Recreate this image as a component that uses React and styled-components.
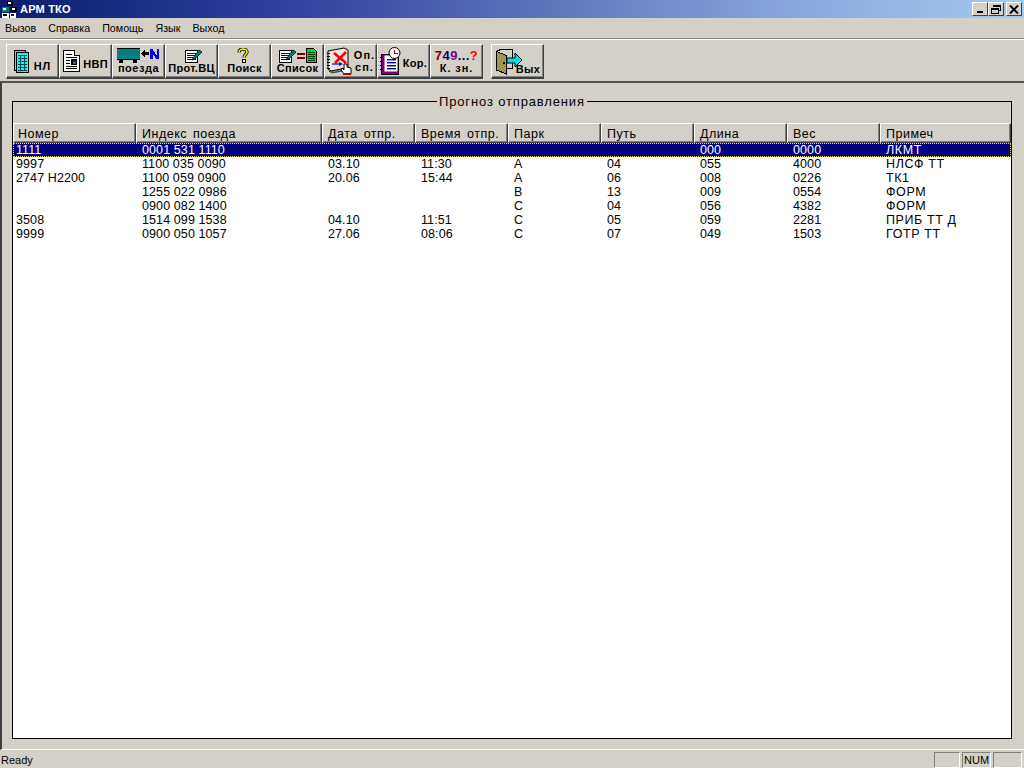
import React from 'react';
import styled, { createGlobalStyle } from 'styled-components';

const GlobalStyle = createGlobalStyle`
  html, body {
    margin: 0;
    padding: 0;
    height: 100%;
    overflow: hidden;
    background: #d4d0c8;
  }
  #root {
    height: 100%;
  }
`;

const Win = styled.div`
  display: flex;
  flex-direction: column;
  height: 100vh;
  background: #d4d0c8;
  color: #000;
  font-family: 'Liberation Sans', Arial, sans-serif;
  font-size: 11px;
`;

const TitleBar = styled.div`
  display: flex;
  align-items: center;
  height: 18px;
  flex: none;
  padding: 0 2px;
  background: linear-gradient(90deg, #0a1f6e 0%, #2f3e9c 27%, #5f76bd 54%, #85a5dc 76%, #a6caf0 100%);
`;

const TitleText = styled.span`
  flex: 1;
  margin-left: 2px;
  color: #fff;
  font-weight: bold;
  font-size: 11px;
  letter-spacing: 0.2px;
`;

const CaptionButton = styled.div`
  width: 16px;
  height: 14px;
  box-sizing: border-box;
  margin-left: ${p => p.$gap || 0}px;
  background: #d4d0c8;
  border: 1px solid;
  border-color: #fff #404040 #404040 #fff;
  display: flex;
  align-items: center;
  justify-content: center;
`;

const MenuBar = styled.div`
  display: flex;
  align-items: center;
  height: 20px;
  flex: none;
  padding-left: 5px;
  gap: 12px;
  border-bottom: 1px solid #808080;
`;

const MenuItem = styled.span`
  font-size: 10.7px;
  color: #000;
`;

const Toolbar = styled.div`
  display: flex;
  align-items: flex-start;
  height: 42px;
  flex: none;
  box-sizing: border-box;
  padding: 4px 0 0 6px;
  border-top: 1px solid #fff;
`;

const ToolButton = styled.div`
  width: 53px;
  height: 35px;
  flex: none;
  box-sizing: border-box;
  margin-left: ${p => p.$gap || 0}px;
  padding-top: ${p => (p.$stack ? 3 : 0)}px;
  background: #d4d0c8;
  border-top: 1px solid #fff;
  border-left: 1px solid #fff;
  border-right: 1px solid #404040;
  border-bottom: 2px solid #404040;
  box-shadow: inset -1px -1px 0 #808080;
  display: flex;
  flex-direction: ${p => (p.$stack ? 'column' : 'row')};
  align-items: center;
  justify-content: ${p => (p.$stack ? 'flex-start' : 'center')};
  gap: ${p => (p.$stack ? 0 : p.$space ?? 2)}px;
  svg {
    display: block;
    flex: none;
  }
`;

const ToolLabel = styled.span`
  font-weight: bold;
  font-size: 11px;
  line-height: ${p => p.$lead || 10}px;
  letter-spacing: ${p => p.$spacing ?? 0.3}px;
  white-space: nowrap;
  text-align: center;
  margin-top: ${p => p.$top || 0}px;
  margin-left: ${p => p.$left || 0}px;
`;

const Digits = styled.span`
  font-weight: bold;
  font-size: 13px;
  line-height: 15px;
  letter-spacing: 0.4px;
  white-space: nowrap;
`;

const Digit = styled.span`
  color: ${p => p.$color};
`;

const Client = styled.div`
  flex: 1;
  min-height: 0;
  box-sizing: border-box;
  display: flex;
  padding: 18px 12px 10px 10px;
  border-top: 2px solid #505050;
  border-left: 2px solid #404040;
  border-bottom: 1px solid #fff;
`;

const Panel = styled.div`
  flex: 1;
  position: relative;
  display: flex;
  flex-direction: column;
  box-sizing: border-box;
  border: 1px solid #000;
  padding-top: 21px;
  min-width: 0;
`;

const Legend = styled.span`
  position: absolute;
  top: -8px;
  left: 424px;
  padding: 0 2px;
  background: #d4d0c8;
  font-size: 13px;
  line-height: 15px;
  letter-spacing: 0.85px;
`;

const COLUMNS = '123px 186px 93px 93px 93px 93px 93px 93px 1fr';

const HeaderRow = styled.div`
  display: grid;
  grid-template-columns: ${COLUMNS};
  height: 20px;
  flex: none;
`;

const HeaderCell = styled.div`
  box-sizing: border-box;
  padding-left: ${p => (p.$first ? 4 : 5)}px;
  padding-top: 1px;
  font-size: 12.5px;
  line-height: 18px;
  letter-spacing: 0.5px;
  word-spacing: 2px;
  border-top: 1px solid #fff;
  border-left: 1px solid #fff;
  border-right: 1px solid #404040;
  border-bottom: 1px solid #404040;
  box-shadow: inset -1px -1px 0 #808080;
  white-space: nowrap;
  overflow: hidden;
`;

const Rows = styled.div`
  flex: 1;
  background: #fff;
  min-height: 0;
`;

const Row = styled.div`
  display: grid;
  grid-template-columns: ${COLUMNS};
  height: 14px;
  box-sizing: border-box;
  background: ${p => (p.$selected ? '#000080' : '#fff')};
  color: ${p => (p.$selected ? '#fff' : '#000')};
  outline: ${p => (p.$selected ? '1px dotted #f0e060' : 'none')};
  outline-offset: -1px;
`;

const Cell = styled.div`
  box-sizing: border-box;
  height: 14px;
  padding-left: ${p => (p.$first ? 3 : 6)}px;
  padding-top: 1px;
  font-size: 12.5px;
  line-height: 13px;
  letter-spacing: ${p => (p.$note ? 0.6 : 0.1)}px;
  white-space: nowrap;
  overflow: hidden;
`;

const StatusBar = styled.div`
  display: flex;
  align-items: flex-end;
  height: 18px;
  flex: none;
  padding-right: 2px;
`;

const StatusText = styled.span`
  flex: 1;
  padding-left: 1px;
  font-size: 11px;
  line-height: 15px;
`;

const StatusPane = styled.div`
  width: ${p => p.$w}px;
  height: 16px;
  box-sizing: border-box;
  margin-left: 2px;
  padding-left: 1px;
  border: 1px solid;
  border-color: #808080 #fff #fff #808080;
  font-size: 11px;
  line-height: 15px;
`;

const AppIcon = () => (
  <svg width="16" height="17" viewBox="0 0 16 17" shapeRendering="crispEdges">
    <rect x="5" y="0" width="6" height="5" fill="#000" />
    <rect x="6" y="1" width="3" height="2" fill="#fff" />
    <rect x="0" y="6" width="7" height="5" fill="#008080" />
    <rect x="1" y="7" width="3" height="2" fill="#fff" />
    <rect x="8" y="6" width="7" height="5" fill="#000" />
    <rect x="10" y="7" width="3" height="2" fill="#fff" />
    <rect x="0" y="12" width="7" height="5" fill="#fff" />
    <rect x="1" y="13" width="4" height="2" fill="#000" />
    <rect x="8" y="12" width="6" height="5" fill="#fff" />
    <rect x="9" y="13" width="3" height="2" fill="#000080" />
  </svg>
);

const NlIcon = () => (
  <svg width="15" height="23" viewBox="0 0 15 23" shapeRendering="crispEdges">
    <rect x="0.5" y="0.5" width="11" height="20" fill="#00ffff" stroke="#000" />
    <rect x="2.5" y="2.5" width="12" height="20" fill="#00ffff" stroke="#000" />
    {[5, 8, 11, 14, 17, 20].map(y => (
      <rect key={y} x="4" y={y} width="9" height="1" fill="#004040" />
    ))}
    <rect x="6" y="5" width="1" height="15" fill="#004040" />
    <rect x="10" y="5" width="1" height="15" fill="#004040" />
  </svg>
);

const NvpIcon = () => (
  <svg width="17" height="22" viewBox="0 0 17 22" shapeRendering="crispEdges">
    <path d="M0.5 0.5H11.5L16.5 5.5V21.5H0.5Z" fill="#fff" stroke="#000" />
    <path d="M11.5 0.5V5.5H16.5" fill="#d4d0c8" stroke="#000" />
    <rect x="3" y="4" width="6" height="1" fill="#000" />
    <rect x="3" y="7" width="11" height="1" fill="#000" />
    <rect x="3" y="10" width="4" height="1" fill="#000" />
    <rect x="3" y="13" width="4" height="1" fill="#000" />
    <rect x="3" y="16" width="11" height="1" fill="#000" />
    <rect x="3" y="18" width="11" height="1" fill="#000" />
    <rect x="8" y="9" width="6" height="6" fill="#000" />
    <rect x="10" y="11" width="3" height="3" fill="#0060e0" />
  </svg>
);

const TrainIcon = () => (
  <svg width="43" height="15" viewBox="0 0 43 15" shapeRendering="crispEdges">
    <rect x="0" y="1" width="23" height="10" fill="#008080" />
    <rect x="0" y="0" width="23" height="1" fill="#000" />
    <rect x="0" y="11" width="23" height="1" fill="#000" />
    <rect x="2" y="12" width="4" height="3" fill="#000" />
    <rect x="16" y="12" width="4" height="3" fill="#000" />
    <path d="M24 5L28 1V4H32V7H28V10Z" fill="#000" />
    <path d="M33 1H35.5L39.5 7V1H42V11H39.5L35.5 5V11H33Z" fill="#0000ff" />
  </svg>
);

const PadPen = ({ x = 0 }) => (
  <g transform={`translate(${x} 0)`}>
    <rect x="0.5" y="2.5" width="12" height="12" fill="#fff" stroke="#000" />
    {[5, 7, 9, 11].map(y => (
      <rect key={y} x="2" y={y} width="9" height="1" fill="#0000c0" />
    ))}
    <path d="M8 10L14 2L17 4L10 11L7 12Z" fill="#008080" stroke="#000" strokeWidth="0.8" shapeRendering="auto" />
  </g>
);

const ProtIcon = () => (
  <svg width="21" height="15" viewBox="0 0 21 15" shapeRendering="crispEdges">
    <PadPen x={4} />
  </svg>
);

const QuestionIcon = () => (
  <svg width="16" height="15" viewBox="0 0 16 15">
    <path
      d="M2 4.5C2 2 4 1 6 1C8.5 1 10 2.5 10 4C10 6.5 7 6.5 7 9.5"
      fill="none"
      stroke="#000"
      strokeWidth="3.2"
    />
    <path
      d="M2 4.5C2 2 4 1 6 1C8.5 1 10 2.5 10 4C10 6.5 7 6.5 7 9.5"
      fill="none"
      stroke="#ffff00"
      strokeWidth="1.6"
    />
    <rect x="5" y="11" width="4" height="4" fill="#000" />
    <rect x="6" y="12" width="2" height="2" fill="#ffff00" />
  </svg>
);

const ListIcon = () => (
  <svg width="38" height="15" viewBox="0 0 38 15" shapeRendering="crispEdges">
    <PadPen />
    <rect x="18" y="5" width="8" height="2" fill="#800000" />
    <rect x="18" y="9" width="8" height="2" fill="#800000" />
    <path d="M27.5 0.5H34.5L37.5 3.5V14.5H27.5Z" fill="#00e000" stroke="#000" />
    {[4, 6, 8, 10, 12].map(y => (
      <rect key={y} x="29" y={y} width="7" height="1" fill="#004000" />
    ))}
  </svg>
);

const OpListIcon = () => (
  <svg width="28" height="28" viewBox="0 0 28 28">
    <path d="M2 4L18 1L22 3V21L5 24L2 22Z" fill="#e8e8e0" stroke="#000" />
    <path d="M5 24L22 21V23L6 26L3 24Z" fill="#808080" stroke="#000" strokeWidth="0.6" />
    {[6, 9, 12, 15, 18, 21].map(y => (
      <rect key={y} x="1" y={y} width="3" height="1" fill="#000" />
    ))}
    <path d="M8 6L20 16M20 5L9 16" stroke="#ff0000" strokeWidth="2.6" />
    <path d="M6 17H14" stroke="#0000ff" strokeWidth="1.2" />
    <path d="M13 15L17 17L13 19Z" fill="#0000ff" />
    <path d="M18 17V23L16 21L15 23L18 27H25V21L21 20V17Z" fill="#fff" stroke="#000" />
    <rect x="17" y="26" width="8" height="2" fill="#c00000" />
  </svg>
);

const CorIcon = () => (
  <svg width="21" height="28" viewBox="0 0 21 28">
    <path d="M1.5 7.5H18.5V27.5H1.5Z" fill="#800080" stroke="#000" />
    <rect x="4.5" y="8.5" width="13" height="16" fill="#fff" />
    {[12, 15, 18, 21].map(y => (
      <rect key={y} x="7" y={y} width="9" height="1.4" fill="#000080" />
    ))}
    {[10, 14, 18, 22].map(y => (
      <rect key={y} x="0" y={y} width="3" height="1" fill="#000" />
    ))}
    <circle cx="14.5" cy="6" r="5.5" fill="#fff" stroke="#000" />
    <path d="M14.5 3V6.5H18" stroke="#c00000" strokeWidth="1.2" fill="none" />
  </svg>
);

const ExitIcon = () => (
  <svg width="28" height="27" viewBox="0 0 28 27" shapeRendering="crispEdges">
    <path d="M1.5 3.5L5.5 1.5H17.5V20.5H12" fill="#d4d0c8" stroke="#000" />
    <path d="M1.5 3.5L11.5 7.5V26L1.5 22Z" fill="#a09848" stroke="#000" />
    <rect x="8" y="14" width="2" height="2" fill="#000" />
    <path d="M12 10H20V5L27 12L20 19V15H12Z" fill="#00e0e0" stroke="#000" shapeRendering="auto" />
  </svg>
);

const columns = ['Номер', 'Индекс поезда', 'Дата отпр.', 'Время отпр.', 'Парк', 'Путь', 'Длина', 'Вес', 'Примеч'];

const rows = [
  ['1111', '0001 531 1110', '', '', '', '', '000', '0000', 'ЛКМТ'],
  ['9997', '1100 035 0090', '03.10', '11:30', 'A', '04', '055', '4000', 'НЛСФ ТТ'],
  ['2747 H2200', '1100 059 0900', '20.06', '15:44', 'A', '06', '008', '0226', 'ТК1'],
  ['', '1255 022 0986', '', '', 'B', '13', '009', '0554', 'ФОРМ'],
  ['', '0900 082 1400', '', '', 'C', '04', '056', '4382', 'ФОРМ'],
  ['3508', '1514 099 1538', '04.10', '11:51', 'C', '05', '059', '2281', 'ПРИБ ТТ Д'],
  ['9999', '0900 050 1057', '27.06', '08:06', 'C', '07', '049', '1503', 'ГОТР ТТ'],
];

const menu = ['Вызов', 'Справка', 'Помощь', 'Язык', 'Выход'];

export default function App() {
  return (
    <Win>
      <GlobalStyle />
      <TitleBar>
        <AppIcon />
        <TitleText>АРМ ТКО</TitleText>
        <CaptionButton>
          <svg width="8" height="8" viewBox="0 0 8 8" shapeRendering="crispEdges">
            <rect x="1" y="6" width="6" height="2" fill="#000" />
          </svg>
        </CaptionButton>
        <CaptionButton>
          <svg width="10" height="9" viewBox="0 0 10 9" shapeRendering="crispEdges">
            <path d="M2.5 2V0.5H9.5V5.5H7.5" fill="none" stroke="#000" />
            <rect x="2" y="0" width="8" height="2" fill="#000" />
            <rect x="0.5" y="3.5" width="7" height="5" fill="#d4d0c8" stroke="#000" />
            <rect x="0" y="3" width="8" height="2" fill="#000" />
          </svg>
        </CaptionButton>
        <CaptionButton $gap={2}>
          <svg width="10" height="9" viewBox="0 0 10 9">
            <path d="M1 0.5L9 8.5M9 0.5L1 8.5" stroke="#000" strokeWidth="1.9" />
          </svg>
        </CaptionButton>
      </TitleBar>
      <MenuBar>
        {menu.map(m => (
          <MenuItem key={m}>{m}</MenuItem>
        ))}
      </MenuBar>
      <Toolbar>
        <ToolButton $space={5}>
          <NlIcon />
          <ToolLabel $top={9} $spacing={1}>
            НЛ
          </ToolLabel>
        </ToolButton>
        <ToolButton $space={3}>
          <NvpIcon />
          <ToolLabel $top={6}>НВП</ToolLabel>
        </ToolButton>
        <ToolButton $stack>
          <TrainIcon />
          <ToolLabel $spacing={0.5}>поезда</ToolLabel>
        </ToolButton>
        <ToolButton $stack>
          <ProtIcon />
          <ToolLabel>Прот.ВЦ</ToolLabel>
        </ToolButton>
        <ToolButton $stack>
          <QuestionIcon />
          <ToolLabel>Поиск</ToolLabel>
        </ToolButton>
        <ToolButton $stack>
          <ListIcon />
          <ToolLabel>Список</ToolLabel>
        </ToolButton>
        <ToolButton $space={0}>
          <OpListIcon />
          <ToolLabel $lead={12} $spacing={1}>
            Оп.
            <br />
            сп.
          </ToolLabel>
        </ToolButton>
        <ToolButton>
          <CorIcon />
          <ToolLabel $top={4}>Кор.</ToolLabel>
        </ToolButton>
        <ToolButton $stack>
          <Digits>
            <Digit $color="#800000">7</Digit>
            <Digit $color="#000080">4</Digit>
            <Digit $color="#800080">9</Digit>
            <Digit $color="#000080">...</Digit>
            <Digit $color="#ff0000">?</Digit>
          </Digits>
          <ToolLabel $spacing={0.9}>К. зн.</ToolLabel>
        </ToolButton>
        <ToolButton $gap={8}>
          <ExitIcon />
          <ToolLabel $top={16} $left={-9}>
            Вых
          </ToolLabel>
        </ToolButton>
      </Toolbar>
      <Client>
        <Panel>
          <Legend>Прогноз отправления</Legend>
          <HeaderRow>
            {columns.map((c, i) => (
              <HeaderCell key={c} $first={i === 0}>
                {c}
              </HeaderCell>
            ))}
          </HeaderRow>
          <Rows>
            {rows.map((r, i) => (
              <Row key={i} $selected={i === 0}>
                {r.map((v, j) => (
                  <Cell key={j} $first={j === 0} $note={j === 8}>
                    {v}
                  </Cell>
                ))}
              </Row>
            ))}
          </Rows>
        </Panel>
      </Client>
      <StatusBar>
        <StatusText>Ready</StatusText>
        <StatusPane $w={26} />
        <StatusPane $w={29}>NUM</StatusPane>
        <StatusPane $w={29} />
      </StatusBar>
    </Win>
  );
}
